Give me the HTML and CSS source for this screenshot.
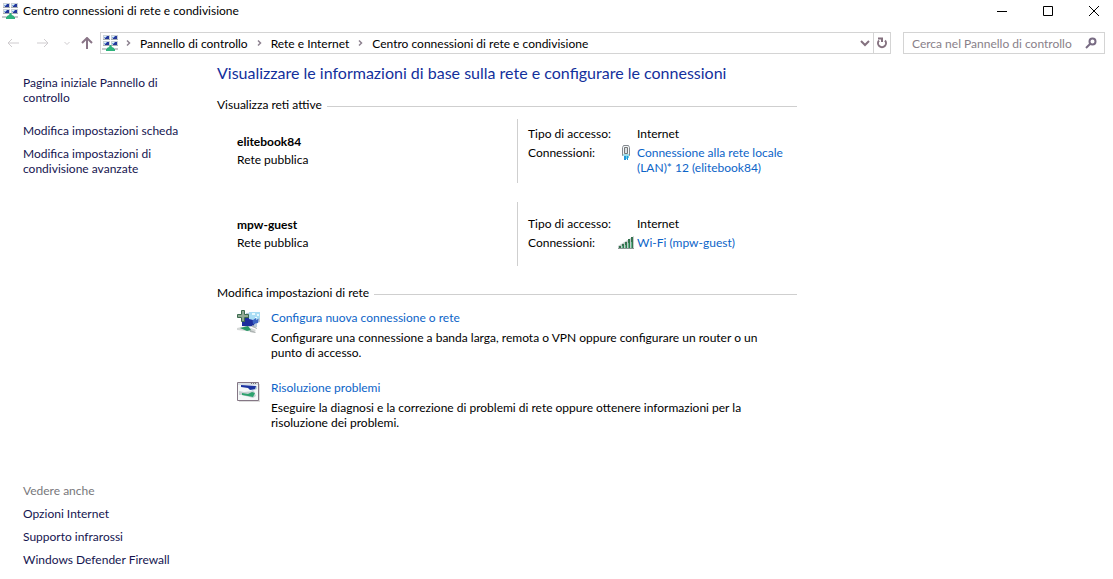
FILE: index.html
```html
<!DOCTYPE html>
<html lang="it">
<head>
<meta charset="utf-8">
<meta name="viewport" content="width=device-width, initial-scale=1">
<title>Centro connessioni di rete e condivisione</title>
<link rel="stylesheet" href="styles.css">
</head>
<body>
<svg class="defs" aria-hidden="true">
  <symbol id="screen" viewBox="0 0 7 6">
    <path fill="#c9d0d6" d="M0 0h7v5H0z"/><path fill="#24369a" d="M2 1h4v3H2z"/><path fill="#dfeefa" d="M1 1h2v1H1z"/><path fill="#7fa6dd" d="M1 2h2v1H1zM3 1h1v1H3z"/><path fill="#a5adb3" d="M0 4h7v1H0z"/>
  </symbol>
  <symbol id="network" viewBox="0 0 16 16">
    <use href="#screen" x="1" y="0" width="7" height="6"/><use href="#screen" x="9" y="0" width="7" height="6"/>
    <use href="#screen" x="1" y="6" width="7" height="6"/><use href="#screen" x="9" y="6" width="7" height="6"/>
    <path fill="#c5c9cc" d="M0 13h16v2H0z"/><path fill="#2fb27c" d="M8 10h1l1 2 2 1v1h1v2H4v-2h1v-1l2-1z"/>
  </symbol>
  <symbol id="chevron" viewBox="0 0 6 8"><path d="M1 1.500l2.500 2.500L1 6.500" fill="none" stroke="#8d8290" stroke-width="1.500"/></symbol>
</svg>
<header class="titlebar">
  <svg class="app-icon" aria-hidden="true"><use href="#network"/></svg>
  <span class="window-title">Centro connessioni di rete e condivisione</span>
  <div class="window-buttons">
    <button aria-label="Riduci a icona"><svg viewBox="0 0 12 12"><path d="M1 6.500h10"/></svg></button>
    <button aria-label="Ingrandisci"><svg viewBox="0 0 12 12"><path d="M1.500 1.500h9v9h-9z"/></svg></button>
    <button aria-label="Chiudi"><svg viewBox="0 0 12 12"><path d="M1 1l10 10M11 1L1 11"/></svg></button>
  </div>
</header>
<nav class="toolbar" aria-label="Navigazione">
  <div class="history">
    <button class="faded" aria-label="Indietro"><svg viewBox="0 0 12 12"><path d="M12 6H1M5 2L1 6l4 4"/></svg></button>
    <button class="faded" aria-label="Avanti"><svg viewBox="0 0 12 12"><path d="M0 6h11M7 2l4 4-4 4"/></svg></button>
    <button class="faded recent" aria-label="Percorsi recenti"><svg viewBox="0 0 8 8"><path d="M1.500 3L4 5.500 6.500 3"/></svg></button>
    <button class="up" aria-label="Su"><svg viewBox="0 0 12 12"><path d="M6 12V1M1 6l5-5 5 5"/></svg></button>
  </div>
  <div class="address">
    <svg class="app-icon" aria-hidden="true"><use href="#network"/></svg>
    <svg class="chevron" aria-hidden="true"><use href="#chevron"/></svg>
    <a href="#">Pannello di controllo</a>
    <svg class="chevron" aria-hidden="true"><use href="#chevron"/></svg>
    <a href="#">Rete e Internet</a>
    <svg class="chevron" aria-hidden="true"><use href="#chevron"/></svg>
    <a href="#">Centro connessioni di rete e condivisione</a>
    <button class="drop" aria-label="Percorsi precedenti"><svg viewBox="0 0 10 8"><path d="M1 2l4 4 4-4"/></svg></button>
    <button class="refresh" aria-label="Aggiorna"><svg viewBox="0 0 12 12"><path d="M3 3.500A4 4 0 1 0 9 3.500"/><path d="M2 1.500h4V5"/></svg></button>
  </div>
  <div class="search">
    <input type="text" aria-label="Cerca nel Pannello di controllo" placeholder="Cerca nel Pannello di controllo">
    <button aria-label="Cerca"><svg viewBox="0 0 12 12"><circle cx="7.500" cy="4.500" r="3"/><path d="M5.500 6.500L1 11"/></svg></button>
  </div>
</nav>
<div class="layout">
  <aside class="sidebar">
    <ul class="tasks">
      <li class="home"><a href="#">Pagina iniziale Pannello di controllo</a></li>
      <li><a href="#">Modifica impostazioni scheda</a></li>
      <li><a href="#">Modifica impostazioni di condivisione avanzate</a></li>
    </ul>
    <ul class="tasks">
      <li class="caption">Vedere anche</li>
      <li><a href="#">Opzioni Internet</a></li>
      <li><a href="#">Supporto infrarossi</a></li>
      <li><a href="#">Windows Defender Firewall</a></li>
    </ul>
  </aside>
  <main class="content">
    <h1>Visualizzare le informazioni di base sulla rete e configurare le connessioni</h1>
    <h2>Visualizza reti attive</h2>
    <section class="network">
      <div class="identity"><h3>elitebook84</h3><p>Rete pubblica</p></div>
      <dl class="details">
        <dt>Tipo di accesso:</dt><dd>Internet</dd>
        <dt>Connessioni:</dt>
        <dd class="connection">
          <svg viewBox="0 0 16 16" aria-hidden="true"><path fill="#f3f7f8" stroke="#84898f" d="M4.500 2.500l1-2h5l1 2v8h-7z"/><path fill="#d9e1e5" stroke="#777" d="M6.500 2.500h3v6h-3z"/><path fill="#a0dce8" d="M5 9h6v2H5z"/><path fill="#2396dc" d="M6 11h2v4H6zM9 11h1v4H9z"/><path fill="#64d4e6" d="M8 11h1v3H8zM10 11h1v2h-1z"/></svg>
          <a href="#">Connessione alla rete locale (LAN)* 12 (elitebook84)</a>
        </dd>
      </dl>
    </section>
    <section class="network">
      <div class="identity"><h3>mpw-guest</h3><p>Rete pubblica</p></div>
      <dl class="details">
        <dt>Tipo di accesso:</dt><dd>Internet</dd>
        <dt>Connessioni:</dt>
        <dd class="connection">
          <svg viewBox="0 0 16 16" aria-hidden="true"><path fill="#c4cbcb" d="M0 14V11L16 1v13z"/><path fill="#35734f" d="M1 11h2v2H1zM4 9h2v4H4zM7 7h2v6H7zM10 4h2v9h-2zM13 2h2v11h-2z"/><path fill="#60b58a" d="M4 11h1v2H4zM7 10h1v3H7zM10 8h1v5h-1zM13 7h1v6h-1z"/><path fill="#8d9696" d="M0 13h16v1H0z"/></svg>
          <a href="#">Wi-Fi (mpw-guest)</a>
        </dd>
      </dl>
    </section>
    <h2>Modifica impostazioni di rete</h2>
    <section class="action">
      <svg viewBox="0 0 24 24" aria-hidden="true"><path fill="#b8cbd9" d="M9 3l14-1v10l-3 1v4H8z"/><path fill="#1c2e9c" d="M5 8l14-3v7l-3 4H5z"/><path fill="#3d66c4" d="M15 5h7l-1 8-5 1z"/><path fill="#a9ddf4" d="M12 2h11v6l-4 2v-2l-3 2-4-1z"/><path fill="#e8faff" d="M15 3h3v2h-3zM20 4h2v2h-2zM18 7h2v1h-2z"/><path fill="#d5d8d7" d="M0 18l9-2 10 4-2 2-8-1-9-1z"/><path fill="#aeb4b3" d="M15 15l5 3v1l-5-2zM13 20l6 2-1 1-5-1z"/><path fill="#279965" d="M3 18l8-2 3 4-4 1z"/><path fill="#92a995" stroke="#3d6c50" d="M4.500.500h3v4h4v3h-4v4h-3v-4h-4v-3h4z"/></svg>
      <div><h3><a href="#">Configura nuova connessione o rete</a></h3><p>Configurare una connessione a banda larga, remota o VPN oppure configurare un router o un punto di accesso.</p></div>
    </section>
    <section class="action">
      <svg viewBox="0 0 24 24" aria-hidden="true"><path fill="#ddd" d="M2 4h21v18H2z"/><path fill="#f5f8f8" stroke="#857785" d="M.500 2.500h21v18H.500z"/><path fill="#d8dfe5" d="M1 3h20v2H1z"/><path fill="#777" d="M14 3h1v1h-1zM16 3h1v1h-1zM18 3h1v1h-1z"/><path fill="#bad0dc" d="M12 6h8v3l-5 2z"/><path fill="#1c34a0" d="M4 5l15 1-1 3-5 1-2-2-7-1z"/><path fill="#c6cfd1" d="M2 11l5 1 10-1 2 5-3 2-11-3H2z"/><path fill="#2ba26d" d="M5 13l6 1 4-2 3 1-2 4-5-1-6-1z"/></svg>
      <div><h3><a href="#">Risoluzione problemi</a></h3><p>Eseguire la diagnosi e la correzione di problemi di rete oppure ottenere informazioni per la risoluzione dei problemi.</p></div>
    </section>
  </main>
</div>
</body>
</html>
```
FILE: styles.css
```css
* { box-sizing: border-box; }
body {
  margin: 0;
  min-height: 100vh;
  display: flex;
  flex-direction: column;
  background: #fff;
  color: #000;
  font: 12px/15px "Segoe UI", Lato, "Open Sans", sans-serif;
}
h1, h2, h3, p, ul, dl, dd { margin: 0; padding: 0; }
ul { list-style: none; }
a { color: inherit; text-decoration: none; }
a:hover { text-decoration: underline; }
button {
  display: flex;
  align-items: center;
  justify-content: center;
  padding: 0;
  border: 0;
  background: none;
}
button svg { width: 12px; height: 12px; fill: none; stroke: currentColor; }
.defs { position: absolute; width: 0; height: 0; }
.app-icon { width: 16px; height: 16px; flex: none; }

.titlebar { display: flex; align-items: center; height: 21px; padding-left: 2px; gap: 5px; }
.window-buttons { display: flex; gap: 8px; margin-left: auto; }
.window-buttons button { width: 38px; height: 21px; color: #000; }
.window-title { white-space: nowrap; }

.toolbar { display: flex; align-items: center; margin-top: 11px; padding-right: 8px; }
.history { display: flex; align-items: center; flex: none; width: 100px; padding-left: 7px; }
.history button { width: 12px; height: 22px; margin-right: 18px; color: #897587; }
.history .faded { color: #cfcccf; }
.history .faded.recent { width: 8px; margin: 0 10px 0 -4px; }
.history .recent svg { width: 8px; height: 8px; }
.history .up { margin-right: 0; }
.history .up svg { stroke-width: 2; }
.address { display: flex; align-items: center; flex: 1; height: 22px; padding-left: 1px; border: 1px solid #d4d4d4; white-space: nowrap; }
.chevron { width: 6px; height: 8px; margin: 0 8px 0 9px; flex: none; }
.app-icon + .chevron { margin-left: 8px; }
.address button { width: 16px; height: 20px; color: #84717f; }
.address button svg { stroke-width: 2; }
.address .drop { margin-left: auto; }
.address .drop svg { width: 10px; height: 8px; }
.address .refresh { width: 17px; border-left: 1px solid #d4d4d4; }
.search { display: flex; width: 202px; height: 22px; margin-left: 12px; padding-left: 8px; border: 1px solid #d4d4d4; }
.search input { flex: 1; min-width: 0; padding: 0; border: 0; outline: 0; font: inherit; background: none; }
.search input::placeholder { color: #897f89; opacity: 1; }
.search button { width: 26px; color: #786b83; }
.search button svg { stroke-width: 2; }

.layout { display: flex; flex: 1; }
.sidebar { display: flex; flex-direction: column; justify-content: space-between; width: 217px; padding: 21px 24px 12px 23px; color: #151550; }
.tasks { display: flex; flex-direction: column; gap: 8px; }
.home { max-width: 160px; margin-bottom: 10px; }
.caption { color: #77777b; }
.content { flex: 1; max-width: 580px; padding-top: 9px; }
h1 { color: #13309c; font-size: 16px; font-weight: 400; line-height: 20px; white-space: nowrap; }
h2 { display: flex; align-items: center; gap: 5px; margin-top: 14px; font-size: 12px; font-weight: 400; white-space: nowrap; }
h2::after { content: ""; flex: 1; height: 1px; margin-top: 4px; background: #cfcfcf; }
h3 { font-size: 12px; }
.network { display: flex; min-height: 64px; margin-top: 7px; }
.network + .network { margin: 19px 0; }
.identity { display: flex; flex-direction: column; justify-content: center; gap: 3px; width: 300px; padding: 0 0 2px 20px; }
.details { display: grid; flex: 1; grid-template-columns: 109px 1fr; align-content: center; gap: 4px 0; padding: 0 0 2px 10px; border-left: 1px solid #cfcfcf; }
.connection { display: flex; gap: 3px; margin-left: -19px; }
.connection svg { width: 16px; height: 16px; flex: none; }
.connection a { color: #0c64c8; }
.action { display: flex; gap: 10px; margin: 10px 0 20px; padding-left: 20px; }
.action > svg { width: 24px; height: 24px; flex: none; }
.action h3 { color: #0c64c8; font-weight: 400; }
.action p { max-width: 510px; margin-top: 5px; }
```
